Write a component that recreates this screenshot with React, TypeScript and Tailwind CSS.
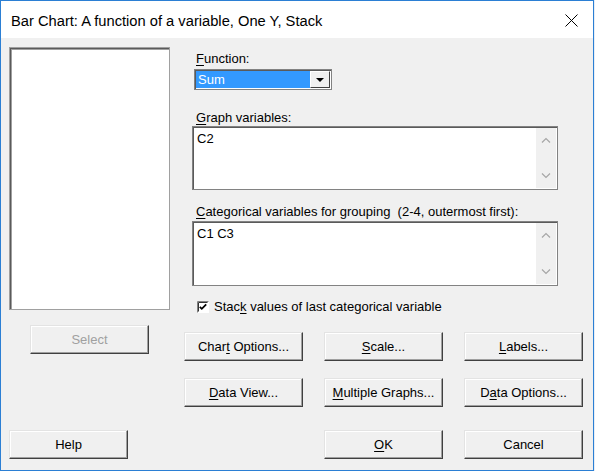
import React from 'react';

const FONT = { fontFamily: '"Liberation Sans", Arial, sans-serif' };

// Underlines one access-key letter inside a label
function Key({ text, at }: { text: string; at: number }) {
  return (
    <span className="whitespace-pre">
      {text.slice(0, at)}
      <span className="underline underline-offset-2">{text[at]}</span>
      {text.slice(at + 1)}
    </span>
  );
}

function Button({ children, disabled }: { children: React.ReactNode; disabled?: boolean }) {
  return (
    <button
      className={`w-[119px] h-[29px] bg-[#f0f0f0] border border-t-[#e3e3e3] border-l-[#e3e3e3] border-r-[#404040] border-b-[#404040] shadow-[inset_-1px_-1px_0_#a0a0a0,inset_1px_1px_0_#ffffff] text-[13px] flex items-center justify-center ${disabled ? 'text-[#a0a0a0]' : 'text-black'}`}
      style={FONT}
    >
      <span>{children}</span>
    </button>
  );
}

function Chevron({ up }: { up?: boolean }) {
  return (
    <svg width="10" height="6" viewBox="0 0 10 6">
      <polyline
        points={up ? '1,5.5 5,1.5 9,5.5' : '1,0.5 5,4.5 9,0.5'}
        fill="none"
        stroke="#a6a6a6"
        strokeWidth="1.2"
      />
    </svg>
  );
}

function TextBox({ value, height }: { value: string; height: string }) {
  return (
    <div className={`ml-[8px] w-[366px] ${height} flex bg-white border border-[#828282] shadow-[inset_1px_1px_0_#5a5a5a]`}>
      <div className="flex-1 pl-[4px] pt-[4px] text-[13px] leading-[15px] text-black" style={FONT}>
        {value}
      </div>
      <div className="w-[20px] my-[1px] mr-[1px] bg-[#f0f0f0] flex flex-col items-center justify-between py-[9px]">
        <Chevron up />
        <Chevron />
      </div>
    </div>
  );
}

export default function App() {
  return (
    <div className="w-[595px] h-[471px] bg-[#e8eef5]">
      <div className="w-[594px] h-[471px] flex flex-col border border-[#2b7fd4] bg-[#f0f0f0]">
        {/* Title bar */}
        <div className="h-[37px] bg-white flex items-center justify-between pl-[10px] pr-[15px] pt-[3px]">
          <span className="text-[14.7px] text-black" style={FONT}>
            Bar Chart: A function of a variable, One Y, Stack
          </span>
          <svg width="13" height="13" viewBox="0 0 13 13" className="-mt-[2px]">
            <path d="M0.5 0.5 L12.5 12.5 M12.5 0.5 L0.5 12.5" stroke="#000" strokeWidth="1" />
          </svg>
        </div>

        {/* Body */}
        <div className="flex items-start pl-[8px]">
          {/* Left column: variable list */}
          <div className="w-[161px] flex flex-col">
            <div className="mt-[9px] h-[263px] bg-white border border-[#a0a0a0] shadow-[inset_1px_1px_0_#5a5a5a,inset_2px_2px_0_#a0a0a0]" />
            <div className="mt-[15px] ml-[21px]">
              <Button disabled>Select</Button>
            </div>
          </div>

          {/* Right column */}
          <div className="ml-[14px] w-[399px] flex flex-col text-[13px] leading-[14px] text-black" style={FONT}>
            <div className="mt-[14px] ml-[12px]"><Key text="Function:" at={0} /></div>
            <div className="mt-[3px] ml-[10px] w-[138px] h-[21px] flex bg-white border border-[#828282] shadow-[inset_1px_1px_0_#5a5a5a] p-[1px]">
              <div className="flex-1 bg-[#3399ff] text-white pl-[2px] flex items-center">Sum</div>
              <div className="w-[20px] bg-[#f0f0f0] border border-t-[#ffffff] border-l-[#ffffff] border-r-[#404040] border-b-[#404040] flex items-center justify-center">
                <svg width="8" height="4" viewBox="0 0 8 4">
                  <polygon points="0,0 8,0 4,4" fill="#000" />
                </svg>
              </div>
            </div>

            <div className="mt-[21px] ml-[12px]"><Key text="Graph variables:" at={0} /></div>
            <div className="mt-[1px]">
              <TextBox value="C2" height="h-[64px]" />
            </div>

            <div className="mt-[15px] ml-[12px]">
              <Key text="Categorical variables for grouping  (2-4, outermost first):" at={0} />
            </div>
            <div className="mt-[2px]">
              <TextBox value="C1 C3" height="h-[65px]" />
            </div>

            <div className="mt-[14px] ml-[13px] flex items-center gap-[5px]">
              <svg width="12" height="12" viewBox="0 0 12 12">
                <rect x="0" y="0" width="12" height="12" fill="#fff" />
                <path d="M0.5 11.5 V0.5 H11.5" fill="none" stroke="#808080" />
                <path d="M1.5 10.5 V1.5 H10.5" fill="none" stroke="#333" />
                <polyline points="2.8,5.8 4.8,7.8 9.2,3.4" fill="none" stroke="#000" strokeWidth="1.8" />
              </svg>
              <Key text="Stack values of last categorical variable" at={4} />
            </div>

            <div className="mt-[18px] flex gap-[21px]">
              <Button><Key text="Chart Options..." at={4} /></Button>
              <Button><Key text="Scale..." at={0} /></Button>
              <Button><Key text="Labels..." at={0} /></Button>
            </div>
            <div className="mt-[17px] flex gap-[21px]">
              <Button><Key text="Data View..." at={0} /></Button>
              <Button><Key text="Multiple Graphs..." at={0} /></Button>
              <Button><Key text="Data Options..." at={1} /></Button>
            </div>
          </div>
        </div>

        {/* Bottom row */}
        <div className="mt-[23px] pl-[8px] flex">
          <Button>Help</Button>
          <div className="ml-[196px] flex gap-[21px]">
            <Button><Key text="OK" at={0} /></Button>
            <Button>Cancel</Button>
          </div>
        </div>
      </div>
    </div>
  );
}
